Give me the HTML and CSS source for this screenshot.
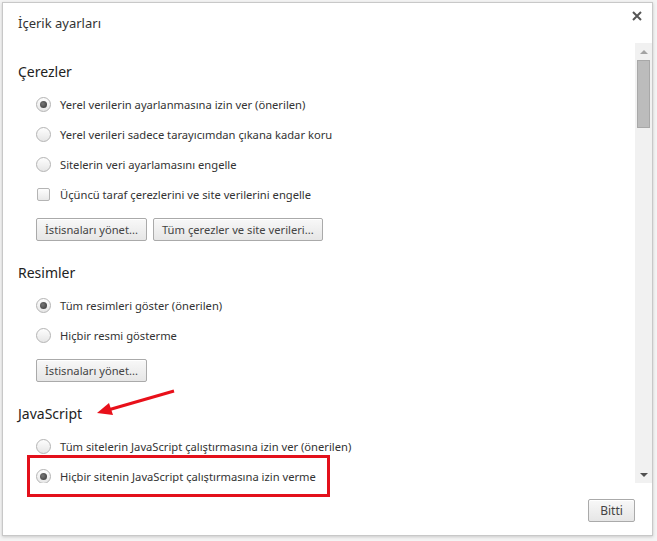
FILE: index.html
```html
<!DOCTYPE html>
<html lang="tr">
<head>
<meta charset="utf-8">
<title>İçerik ayarları</title>
<link rel="stylesheet" href="styles.css">
</head>
<body>
<div class="dialog">
  <div class="header">
    <h1 class="title">İçerik ayarları</h1>
    <svg class="close" width="10" height="10" viewBox="0 0 10 10"><path d="M1 1 L9 9 M9 1 L1 9" stroke="#555" stroke-width="2"/></svg>
  </div>
  <div class="body">
    <div class="content">
      <section class="section first">
        <h2 class="heading">Çerezler</h2>
        <div class="row"><span class="radio checked"></span><span>Yerel verilerin ayarlanmasına izin ver (önerilen)</span></div>
        <div class="row"><span class="radio"></span><span>Yerel verileri sadece tarayıcımdan çıkana kadar koru</span></div>
        <div class="row"><span class="radio"></span><span>Sitelerin veri ayarlamasını engelle</span></div>
        <div class="row"><span class="checkbox"></span><span>Üçüncü taraf çerezlerini ve site verilerini engelle</span></div>
        <div class="buttons"><button class="btn">İstisnaları yönet...</button><button class="btn">Tüm çerezler ve site verileri...</button></div>
      </section>
      <section class="section">
        <h2 class="heading">Resimler</h2>
        <div class="row"><span class="radio checked"></span><span>Tüm resimleri göster (önerilen)</span></div>
        <div class="row"><span class="radio"></span><span>Hiçbir resmi gösterme</span></div>
        <div class="buttons"><button class="btn">İstisnaları yönet...</button></div>
      </section>
      <section class="section">
        <h2 class="heading">JavaScript</h2>
        <div class="row"><span class="radio"></span><span>Tüm sitelerin JavaScript çalıştırmasına izin ver (önerilen)</span></div>
        <div class="row"><span class="radio checked"></span><span>Hiçbir sitenin JavaScript çalıştırmasına izin verme</span></div>
      </section>
    </div>
    <div class="scrollbar">
      <span class="arrow up"></span>
      <span class="thumb"></span>
      <span class="track"></span>
      <span class="arrow down"></span>
    </div>
  </div>
  <div class="footer"><button class="btn done">Bitti</button></div>
</div>
<svg class="annot-arrow" width="90" height="30" viewBox="0 0 90 30">
  <path d="M80 2 L14 21" stroke="#e8101a" stroke-width="3" fill="none"/>
  <path d="M3 24 L15 14 L19 26 Z" fill="#e8101a"/>
</svg>
<div class="annot-box"></div>
</body>
</html>
```
FILE: styles.css
```css
* { box-sizing: border-box; }
html, body { margin: 0; padding: 0; }
body {
  width: 657px;
  height: 541px;
  background: #f4f4f4;
  font-family: "Noto Sans", "Open Sans", sans-serif;
  color: #333;
  position: relative;
  overflow: hidden;
  padding: 2px 0 0 2px;
}
.dialog {
  width: 651px;
  height: 534px;
  background: #fff;
  border: 1px solid #c8c8c8;
  box-shadow: 0 1px 3px rgba(0,0,0,0.18);
  display: flex;
  flex-direction: column;
}
.header {
  height: 40px;
  flex: none;
  display: flex;
  justify-content: space-between;
  align-items: flex-start;
  padding: 0 10px 0 15px;
}
.title {
  margin: 0;
  font-size: 13px;
  font-weight: normal;
  color: #333;
  line-height: 20px;
  padding-top: 10px;
}
.close { margin-top: 8px; }
.body {
  height: 440px;
  flex: none;
  display: flex;
}
.content {
  flex: 1;
  padding: 0 0 0 15px;
  overflow: hidden;
}
.section { margin-top: 22px; }
.section.first { margin-top: 19px; }
.heading {
  margin: 0 0 7px;
  font-size: 14px;
  line-height: 20px;
  font-weight: normal;
  color: #222;
}
.row {
  height: 30px;
  display: flex;
  align-items: center;
  padding-left: 18px;
  font-size: 11.2px;
  color: #333;
}
.radio {
  width: 15px;
  height: 15px;
  border-radius: 50%;
  border: 1px solid #b4b4b4;
  background: linear-gradient(#fdfdfd, #e6e6e6);
  margin-right: 9px;
  flex: none;
  display: flex;
  align-items: center;
  justify-content: center;
}
.radio.checked::after {
  content: "";
  width: 7px;
  height: 7px;
  border-radius: 50%;
  background: radial-gradient(circle at 40% 40%, #777, #333);
}
.checkbox {
  width: 13px;
  height: 13px;
  border: 1px solid #b4b4b4;
  border-radius: 2px;
  background: linear-gradient(#fdfdfd, #e8e8e8);
  margin: 0 10px 0 1px;
  flex: none;
}
.buttons {
  margin-top: 9px;
  padding-left: 18px;
  display: flex;
  gap: 6px;
}
.btn {
  height: 23px;
  padding: 0 8px;
  font-family: inherit;
  font-size: 11.2px;
  color: #444;
  border: 1px solid #aaa;
  border-radius: 2px;
  background: linear-gradient(#f8f8f8, #e6e6e6);
  box-shadow: inset 0 1px 0 #fff;
  line-height: 21px;
}
.scrollbar {
  width: 17px;
  flex: none;
  background: #f1f1f1;
  display: flex;
  flex-direction: column;
  align-items: center;
  padding: 0 2px;
}
.arrow {
  width: 0;
  height: 0;
  border-left: 4px solid transparent;
  border-right: 4px solid transparent;
  flex: none;
}
.arrow.up {
  border-bottom: 4px solid #a3a3a3;
  margin-top: 7px;
}
.arrow.down {
  border-top: 4px solid #505050;
  margin-bottom: 6px;
}
.thumb {
  width: 13px;
  height: 68px;
  margin-top: 6px;
  background: #bcbcbc;
  border: 1px solid #a8a8a8;
  flex: none;
}
.track { flex: 1; }
.footer {
  flex: 1;
  display: flex;
  justify-content: flex-end;
  align-items: flex-start;
  padding: 16px 17px 0 0;
}
.btn.done { width: 47px; padding: 0; font-size: 12px; }
.annot-arrow {
  position: absolute;
  left: 94px;
  top: 389px;
}
.annot-box {
  position: absolute;
  left: 27px;
  top: 455px;
  width: 303px;
  height: 42px;
  border: 3px solid #e3101b;
}
```
